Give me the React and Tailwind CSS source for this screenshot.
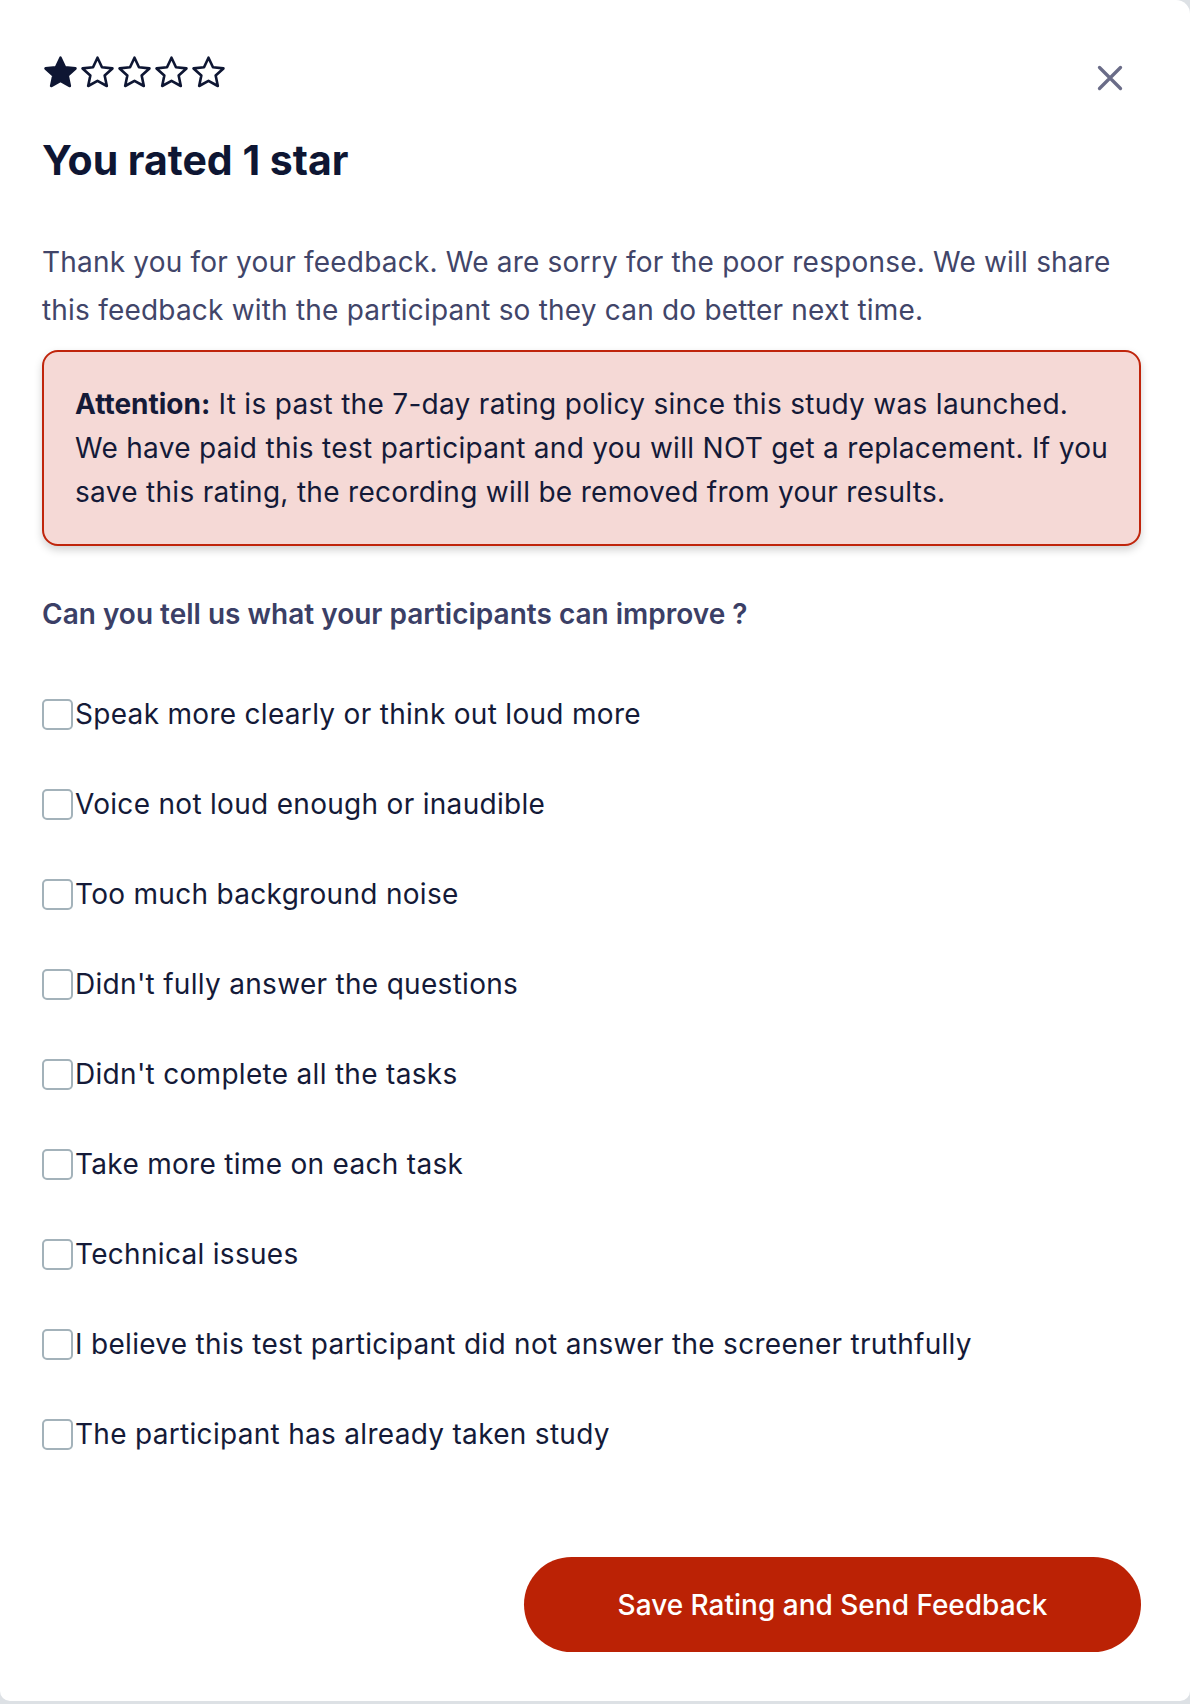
import React, { useState } from 'react';

const reasons = [
  'Speak more clearly or think out loud more',
  'Voice not loud enough or inaudible',
  'Too much background noise',
  "Didn't fully answer the questions",
  "Didn't complete all the tasks",
  'Take more time on each task',
  'Technical issues',
  'I believe this test participant did not answer the screener truthfully',
  'The participant has already taken study',
];

const STAR_PATH =
  'M12 2.4l2.9 6.2 6.8.75-5.05 4.65 1.4 6.75L12 17.4l-6.05 3.35 1.4-6.75L2.3 9.35l6.8-.75z';

const Star = ({ filled }) => (
  <svg viewBox="0 0 24 24" className="w-[37px] h-[37px]">
    <path
      d={STAR_PATH}
      fill={filled ? '#0e1633' : 'none'}
      stroke="#0e1633"
      strokeWidth="1.7"
      strokeLinejoin="round"
    />
  </svg>
);

const App = () => {
  const [rating] = useState(1);
  const [checked, setChecked] = useState({});

  const toggle = (i) => setChecked((c) => ({ ...c, [i]: !c[i] }));

  return (
    <div className="min-h-screen bg-[#dde1e5] font-['Inter',sans-serif]">
      <div className="relative bg-white w-[1190px] h-[1701px] rounded-b-[10px] rounded-tr-[14px] pl-[42px] pr-[49px] pt-[54px]">
        {/* close button */}
        <button className="absolute right-[62px] top-[60px] w-[36px] h-[36px] flex items-center justify-center text-[#6a6c88]">
          <svg viewBox="0 0 24 24" className="w-[36px] h-[36px]" fill="none" stroke="currentColor" strokeWidth="2.2" strokeLinecap="round">
            <path d="M5 5l14 14M19 5L5 19" />
          </svg>
        </button>

        <div className="flex">
          {[1, 2, 3, 4, 5].map((n) => (
            <Star key={n} filled={n <= rating} />
          ))}
        </div>

        <h1 className="mt-[45px] text-[41px] leading-[48px] font-bold text-[#0e1633]">
          You rated 1 star
        </h1>

        <p className="mt-[54px] text-[28px] leading-[48px] tracking-[0.2px] text-[#414569]">
          Thank you for your feedback. We are sorry for the poor response. We will share this feedback with the participant so they can do better next time.
        </p>

        <div className="mt-[16px] rounded-[16px] border-2 border-[#c0250c] bg-[#f5d9d6] pl-[31px] pr-[10px] py-[30px] shadow-[0_4px_8px_rgba(0,0,0,0.18)] text-[28px] leading-[44px] tracking-[0.3px] text-[#141a38]">
          <span className="font-bold tracking-normal">Attention:</span> It is past the 7-day rating policy since this study was launched.
          <br />
          We have paid this test participant and you will NOT get a replacement. If you
          <br />
          save this rating, the recording will be removed from your results.
        </div>

        <h2 className="mt-[50px] text-[28px] leading-[36px] font-semibold text-[#3b3f66]">
          Can you tell us what your participants can improve ?
        </h2>

        <div className="mt-[37px] flex flex-col">
          {reasons.map((r, i) => (
            <label key={r} className="flex items-center h-[90px] cursor-pointer">
              <span
                onClick={() => toggle(i)}
                className={`w-[31px] h-[31px] shrink-0 rounded-[5px] border-2 border-[#a3b2ba] ${checked[i] ? 'bg-[#bb2205]' : 'bg-white'}`}
              />
              <span className="ml-[2px] text-[28px] tracking-[0.3px] text-[#141a38]">{r}</span>
            </label>
          ))}
        </div>

        <div className="mt-[78px] flex justify-end">
          <button className="w-[617px] h-[95px] rounded-full bg-[#bb2205] text-white text-[28px] font-medium">
            Save Rating and Send Feedback
          </button>
        </div>
      </div>
    </div>
  );
};

export default App;
